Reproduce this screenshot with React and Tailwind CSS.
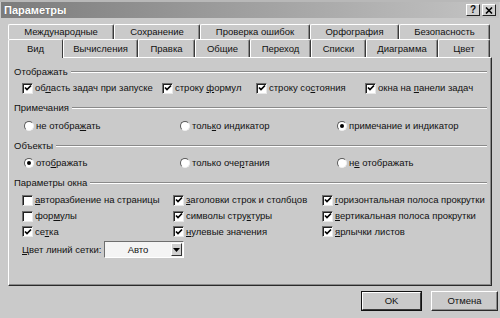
import React from "react";

const U = ({ children }) => <span className="underline underline-offset-[1px]">{children}</span>;

function Check({ checked, children }) {
  return (
    <div className="flex items-center gap-[2px] whitespace-nowrap">
      <div className="w-[11px] h-[11px] bg-white border-t border-l border-t-[#6e6e6e] border-l-[#6e6e6e] border-b border-r border-b-[#e8e8e8] border-r-[#e8e8e8] shadow-[inset_1px_1px_0_#202020] flex items-center justify-center shrink-0">
        {checked && (
          <svg width="8" height="8" viewBox="0 0 8 8">
            <path d="M1 3.5 L3 5.5 L7 1.5" stroke="#000" strokeWidth="1.7" fill="none" />
          </svg>
        )}
      </div>
      <span>{children}</span>
    </div>
  );
}

function Radio({ checked, children }) {
  return (
    <div className="flex items-center gap-[2px] whitespace-nowrap">
      <div className="w-[10px] h-[10px] rounded-full bg-white border border-t-[#5a5a5a] border-l-[#5a5a5a] border-b-[#f0f0f0] border-r-[#f0f0f0] flex items-center justify-center shrink-0">
        {checked && <div className="w-[4px] h-[4px] rounded-full bg-black" />}
      </div>
      <span>{children}</span>
    </div>
  );
}

function Group({ children }) {
  return (
    <div className="flex items-center h-[14px] pl-[5px] pr-[4px]">
      <span className="whitespace-nowrap pr-[3px]">{children}</span>
      <div className="flex-1 h-[2px] border-t border-t-[#8a8a8a] border-b border-b-white" />
    </div>
  );
}

function Tab({ w, children }) {
  return (
    <div
      className="h-full flex items-center justify-center border-t border-l border-t-white border-l-white border-r border-r-[#3a3a3a] rounded-t-[2px] shadow-[inset_-1px_0_0_#8a8a8a]"
      style={{ width: w }}
    >
      {children}
    </div>
  );
}

export default function App() {
  return (
    <div className="w-[500px] h-[318px] bg-[#cacaca] overflow-hidden text-[9.5px] text-[#111] leading-none" style={{ fontFamily: '"Liberation Sans", Arial, sans-serif' }}>
      <div className="h-[2px] bg-[#b8b8b8]" />
      {/* title bar */}
      <div className="h-[16px] mx-[1px] flex items-center bg-gradient-to-r from-[#7c7c7c] via-[#a0a0a0] to-[#c4c4c4]">
        <span className="pl-[3px] font-bold text-white text-[11px] [text-shadow:0_0_1px_#555]">Параметры</span>
        <div className="ml-auto flex gap-[2px] pr-[3px]">
          <div className="w-[14px] h-[12px] bg-[#d0d0d0] border border-t-white border-l-white border-b-[#222] border-r-[#222] flex items-center justify-center font-bold text-[10px]">?</div>
          <div className="w-[14px] h-[12px] bg-[#d0d0d0] border border-t-white border-l-white border-b-[#222] border-r-[#222] flex items-center justify-center">
            <svg width="8" height="7" viewBox="0 0 8 7"><path d="M1 0.5 L7 6.5 M7 0.5 L1 6.5" stroke="#000" strokeWidth="1.6" /></svg>
          </div>
        </div>
      </div>
      {/* tabs */}
      <div className="pl-[8px] mt-[6px]">
        <div className="flex h-[15px]">
          <Tab w={106}>Международные</Tab>
          <Tab w={86}>Сохранение</Tab>
          <Tab w={110}>Проверка ошибок</Tab>
          <Tab w={89}>Орфография</Tab>
          <Tab w={91}>Безопасность</Tab>
        </div>
        <div className="flex h-[18px] items-end">
          <div className="h-[19px] -mb-[1px] relative z-10 bg-[#cacaca] flex items-center justify-center border-t border-l border-t-white border-l-white border-r border-r-[#3a3a3a] w-[55px] rounded-t-[2px]">Вид</div>
          <Tab w={75}>Вычисления</Tab>
          <Tab w={57}>Правка</Tab>
          <Tab w={55}>Общие</Tab>
          <Tab w={61}>Переход</Tab>
          <Tab w={55}>Списки</Tab>
          <Tab w={72}>Диаграмма</Tab>
          <Tab w={52}>Цвет</Tab>
        </div>
        {/* panel */}
        <div className="w-[484px] h-[229px] border-t border-l border-t-white border-l-white border-r border-b border-r-[#2a2a2a] border-b-[#2a2a2a] shadow-[inset_-1px_-1px_0_#8a8a8a] flex flex-col pt-[7px]">
          <Group>Отображать</Group>
          <div className="h-[16px] mt-[1px] pl-[13px] grid grid-cols-[140px_94px_109px_1fr] items-center">
            <Check checked>об<U>л</U>асть задач при запуске</Check>
            <Check checked>строку <U>ф</U>ормул</Check>
            <Check checked>строку со<U>с</U>тояния</Check>
            <Check checked>окна на <U>п</U>анели задач</Check>
          </div>
          <div className="mt-[5px]"><Group>Примечания</Group></div>
          <div className="h-[16px] mt-[3px] pl-[15px] grid grid-cols-[156px_157px_1fr] items-center">
            <Radio>не отобра<U>ж</U>ать</Radio>
            <Radio>толь<U>к</U>о индикатор</Radio>
            <Radio checked>примечание и индикатор</Radio>
          </div>
          <div className="mt-[5px]"><Group>Объекты</Group></div>
          <div className="h-[16px] mt-[2px] pl-[15px] grid grid-cols-[156px_157px_1fr] items-center">
            <Radio checked>ото<U>б</U>ражать</Radio>
            <Radio>только оче<U>р</U>тания</Radio>
            <Radio>н<U>е</U> отображать</Radio>
          </div>
          <div className="mt-[5px]"><Group>Параметры окна</Group></div>
          <div className="h-[16px] mt-[2px] pl-[13px] grid grid-cols-[151px_149px_1fr] items-center">
            <Check><U>а</U>вторазбиение на страницы</Check>
            <Check checked><U>з</U>аголовки строк и столбцов</Check>
            <Check checked><U>г</U>оризонтальная полоса прокрутки</Check>
          </div>
          <div className="h-[16px] pl-[13px] grid grid-cols-[151px_149px_1fr] items-center">
            <Check>фор<U>м</U>улы</Check>
            <Check checked>символы стру<U>к</U>туры</Check>
            <Check checked><U>в</U>ертикальная полоса прокрутки</Check>
          </div>
          <div className="h-[15px] pl-[13px] grid grid-cols-[151px_149px_1fr] items-center">
            <Check checked>се<U>т</U>ка</Check>
            <Check checked><U>н</U>улевые значения</Check>
            <Check checked><U>я</U>рлычки листов</Check>
          </div>
          <div className="h-[17px] mt-[2px] pl-[13px] flex items-center">
            <span className="w-[82px] whitespace-nowrap"><U>Ц</U>вет линий сетки:</span>
            <div className="w-[80px] h-[17px] bg-[#f4f4f4] border border-t-[#6e6e6e] border-l-[#6e6e6e] border-b-white border-r-white flex items-center">
              <span className="flex-1 text-center">Авто</span>
              <div className="w-[11px] h-[13px] mr-[1px] bg-[#cfcfcf] border border-t-white border-l-white border-b-[#333] border-r-[#333] flex items-center justify-center">
                <svg width="7" height="4" viewBox="0 0 7 4"><path d="M0 0 H7 L3.5 4 Z" fill="#000" /></svg>
              </div>
            </div>
          </div>
        </div>
      </div>
      {/* buttons */}
      <div className="flex justify-end gap-[9px] pr-[2px] mt-[5px]">
        <div className="w-[61px] h-[20px] border border-[#111] flex">
          <div className="flex-1 border border-t-white border-l-white border-b-[#3a3a3a] border-r-[#3a3a3a] flex items-center justify-center">OK</div>
        </div>
        <div className="w-[67px] h-[20px] border border-t-white border-l-white border-b-[#2a2a2a] border-r-[#2a2a2a] shadow-[inset_-1px_-1px_0_#8a8a8a] flex items-center justify-center">Отмена</div>
      </div>
    </div>
  );
}
